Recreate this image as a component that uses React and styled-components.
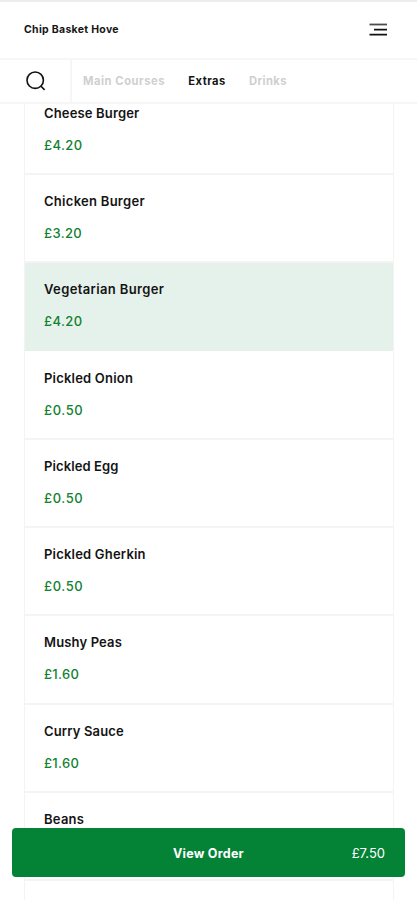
import React from "react";
import styled, { createGlobalStyle } from "styled-components";

const items = [
  { name: "Cheese Burger", price: "£4.20", track: 0.15, priceTrack: 0.4 },
  { name: "Chicken Burger", price: "£3.20", track: 0.28, priceTrack: 0.35 },
  { name: "Vegetarian Burger", price: "£4.20", track: 0.37, priceTrack: 0.4, selected: true },
  { name: "Pickled Onion", price: "£0.50", track: 0.2, priceTrack: 0.6 },
  { name: "Pickled Egg", price: "£0.50", track: 0.1, priceTrack: 0.6 },
  { name: "Pickled Gherkin", price: "£0.50", track: 0.2, priceTrack: 0.6 },
  { name: "Mushy Peas", price: "£1.60", track: 0.15, priceTrack: 0.3 },
  { name: "Curry Sauce", price: "£1.60", track: 0.15, priceTrack: 0.3 },
  { name: "Beans", price: "£0.90", track: 0.25, priceTrack: 0.45 },
  { name: "", price: "" },
];

const App = () => {
  return (
    <>
      <GlobalStyle />
      <Page>
        <Header>
          <Brand>Chip Basket Hove</Brand>
          <MenuButton aria-label="Menu">
            <svg width="18" height="14" viewBox="0 0 18 14">
              <path d="M0.5 1.5H18" stroke="#4c4c4c" strokeWidth="1.8" />
              <path d="M5 6.6H18M0.5 11.7H18" stroke="#111" strokeWidth="1.8" />
            </svg>
          </MenuButton>
        </Header>
        <Nav>
          <SearchButton aria-label="Search">
            <svg width="20" height="20" viewBox="0 0 20 20" fill="none" stroke="#111" strokeWidth="1.6">
              <circle cx="9.2" cy="9.2" r="8.2" />
              <path d="M14.8 15L18.6 18.9" />
            </svg>
          </SearchButton>
          <Tabs>
            <Tab $track={0.55}>Main Courses</Tab>
            <Tab $active $track={0.45}>Extras</Tab>
            <Tab $track={0.4}>Drinks</Tab>
          </Tabs>
        </Nav>
        <Content>
          <List>
            {items.map((item, i) => (
              <Item key={i} $selected={item.selected}>
                <Name $track={item.track}>{item.name}</Name>
                <Price $track={item.priceTrack}>{item.price}</Price>
              </Item>
            ))}
          </List>
        </Content>
        <OrderButton>
          <span />
          <OrderLabel>View Order</OrderLabel>
          <OrderTotal>£7.50</OrderTotal>
        </OrderButton>
      </Page>
    </>
  );
};

// styled components

const GlobalStyle = createGlobalStyle`
  * {
    margin: 0;
    padding: 0;
    box-sizing: border-box;
  }
  body {
    background: #fff;
    font-family: Inter, "Liberation Sans", sans-serif;
    overflow: hidden;
  }
  button {
    border: none;
    background: none;
    font-family: inherit;
  }
  svg {
    display: block;
  }
`;

const Page = styled.div`
  display: flex;
  flex-direction: column;
  height: 900px;
  border-top: 2px solid #ededed;
`;

const Header = styled.header`
  display: flex;
  flex: none;
  align-items: center;
  justify-content: space-between;
  height: 58px;
  padding: 0 30px 1px 24px;
  border-bottom: 2px solid #f6f6f6;
`;

const Brand = styled.h1`
  font-size: 10.5px;
  font-weight: 700;
  line-height: 16px;
  letter-spacing: 0.3px;
  color: #161616;
  white-space: nowrap;
`;

const MenuButton = styled.button`
  flex: none;
`;

const Nav = styled.nav`
  display: flex;
  flex: none;
  height: 44px;
  border-bottom: 2px solid #f6f6f6;
`;

const SearchButton = styled.button`
  display: flex;
  flex: none;
  align-items: center;
  width: 72px;
  padding-left: 25.5px;
  border-right: 2px solid #f6f6f6;
`;

const Tabs = styled.div`
  display: flex;
  align-items: center;
  gap: 23.3px;
  padding-left: 11px;
`;

const Tab = styled.a`
  font-size: 11.2px;
  font-weight: 700;
  line-height: 16px;
  letter-spacing: ${({ $track }) => $track}px;
  color: ${({ $active }) => ($active ? "#161616" : "#cfcfcf")};
  white-space: nowrap;
`;

const Content = styled.main`
  flex: 1;
  min-height: 0;
  padding: 0 23px 0 24px;
  overflow: hidden;
`;

const List = styled.ul`
  margin-top: -17.5px;
  list-style: none;
  border: solid #f3f3f3;
  border-width: 0 1px;
`;

const Item = styled.li`
  height: 88.3px;
  padding: 16.2px 19px 0;
  border-bottom: 2px solid ${({ $selected }) => ($selected ? "#e8f0eb" : "#f4f4f4")};
  background: ${({ $selected }) => ($selected ? "#e5f2eb" : "#fff")};
`;

const Name = styled.h2`
  height: 20px;
  font-size: 13px;
  font-weight: 600;
  line-height: 20px;
  letter-spacing: ${({ $track }) => $track}px;
  color: #141414;
`;

const Price = styled.p`
  margin-top: 12px;
  font-size: 13px;
  font-weight: 500;
  line-height: 20px;
  letter-spacing: ${({ $track }) => $track}px;
  color: #128031;
`;

const OrderButton = styled.button`
  display: grid;
  grid-template-columns: 1fr auto 1fr;
  align-items: center;
  position: absolute;
  left: 12px;
  right: 12px;
  top: 828px;
  height: 49px;
  padding: 1px 20px 0;
  border-radius: 4px;
  background: #048337;
  color: #fff;
`;

const OrderLabel = styled.span`
  font-size: 12.5px;
  font-weight: 700;
  letter-spacing: 0.25px;
  white-space: nowrap;
`;

const OrderTotal = styled.span`
  justify-self: end;
  font-size: 13px;
  font-weight: 400;
`;

export default App;
